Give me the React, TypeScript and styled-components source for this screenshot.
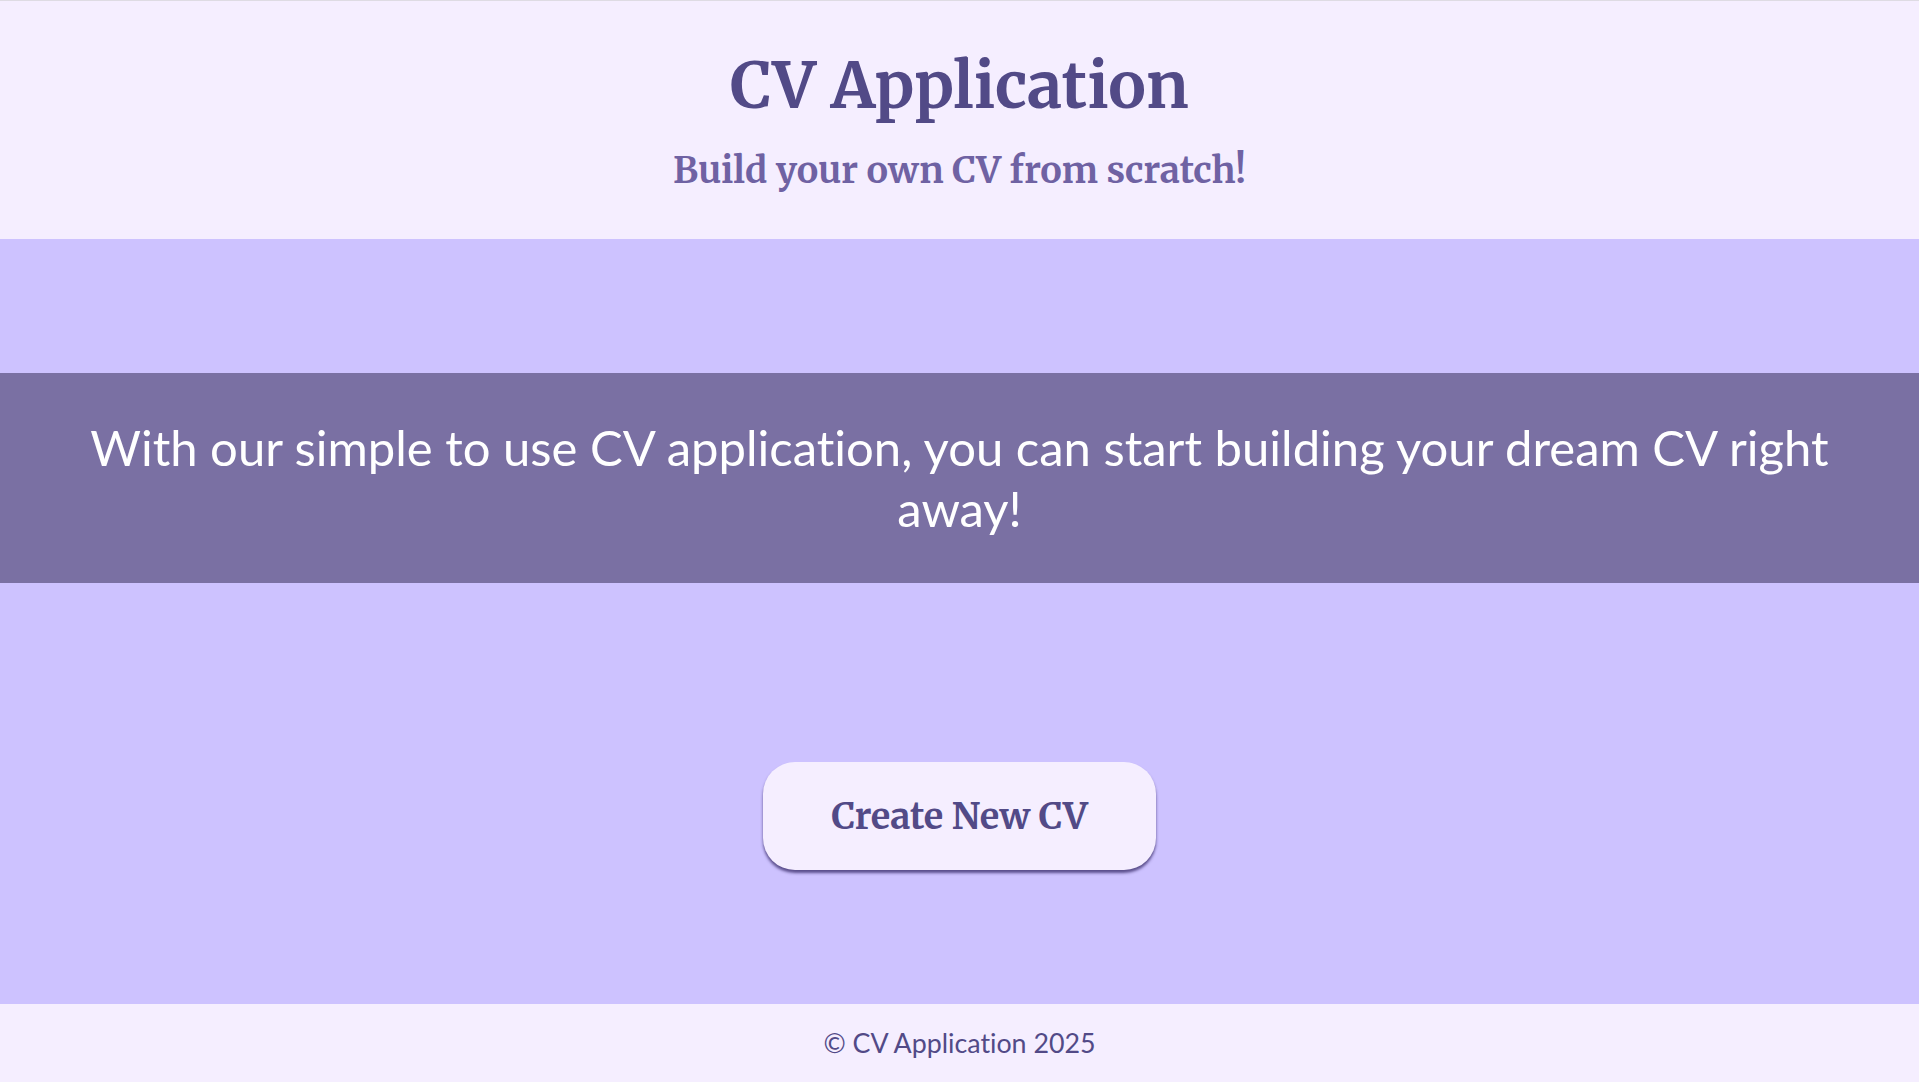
import React from "react";
import styled, { createGlobalStyle } from "styled-components";

const GlobalStyle = createGlobalStyle`
  html, body { margin: 0; padding: 0; }
  body {
    background: #f5eeff;
    font-family: Lato, "Noto Sans", sans-serif;
  }
  * { box-sizing: border-box; }
`;

const Page = styled.div`
  display: flex;
  flex-direction: column;
  min-height: 1082px;
  border-top: 1px solid #dedbe3;
`;

const Header = styled.header`
  background: #f5eeff;
  height: 238px;
  display: flex;
  flex-direction: column;
  align-items: center;
  padding-top: 45px;
`;

const Title = styled.h1`
  margin: 0;
  font-family: Merriweather, "DejaVu Serif", serif;
  font-weight: 700;
  font-size: 63px;
  line-height: 80px;
  color: #524a87;
`;

const Subtitle = styled.h2`
  margin: 0;
  margin-top: 22px;
  font-family: Merriweather, "DejaVu Serif", serif;
  font-weight: 700;
  font-size: 36px;
  line-height: 45px;
  color: #6f62a3;
`;

const Main = styled.main`
  flex: 1;
  background: #cdc2ff;
  display: flex;
  flex-direction: column;
  align-items: center;
  padding: 134px 0;
  gap: 179px;
`;

const Band = styled.section`
  align-self: stretch;
  height: 210px;
  background: #7a70a3;
  display: flex;
  align-items: center;
  justify-content: center;
  padding: 0 64px;
`;

const BandText = styled.p`
  margin: 0;
  text-align: center;
  color: #ffffff;
  font-family: Lato, "Noto Sans", sans-serif;
  font-size: 49px;
  line-height: 61px;
  font-weight: 400;
  font-variant-ligatures: none;
`;

const CreateButton = styled.button`
  width: 393px;
  height: 108px;
  border: none;
  border-radius: 32px;
  background: #f5eeff;
  color: #524a87;
  font-family: Merriweather, "DejaVu Serif", serif;
  font-weight: 700;
  font-size: 36px;
  cursor: pointer;
  box-shadow: 0 3px 3px rgba(70, 58, 120, 0.85);
`;

const Footer = styled.footer`
  height: 78px;
  background: #f5eeff;
  display: flex;
  align-items: center;
  justify-content: center;
  color: #524a87;
  font-family: Lato, "Noto Sans", sans-serif;
  font-size: 26.8px;
  font-variant-ligatures: none;
`;

export default function App() {
  return (
    <>
      <GlobalStyle />
      <Page>
        <Header>
          <Title>CV Application</Title>
          <Subtitle>Build your own CV from scratch!</Subtitle>
        </Header>
        <Main>
          <Band>
            <BandText>
              With our simple to use CV application, you can start building your dream CV right away!
            </BandText>
          </Band>
          <CreateButton>Create New CV</CreateButton>
        </Main>
        <Footer>© CV Application 2025</Footer>
      </Page>
    </>
  );
}
